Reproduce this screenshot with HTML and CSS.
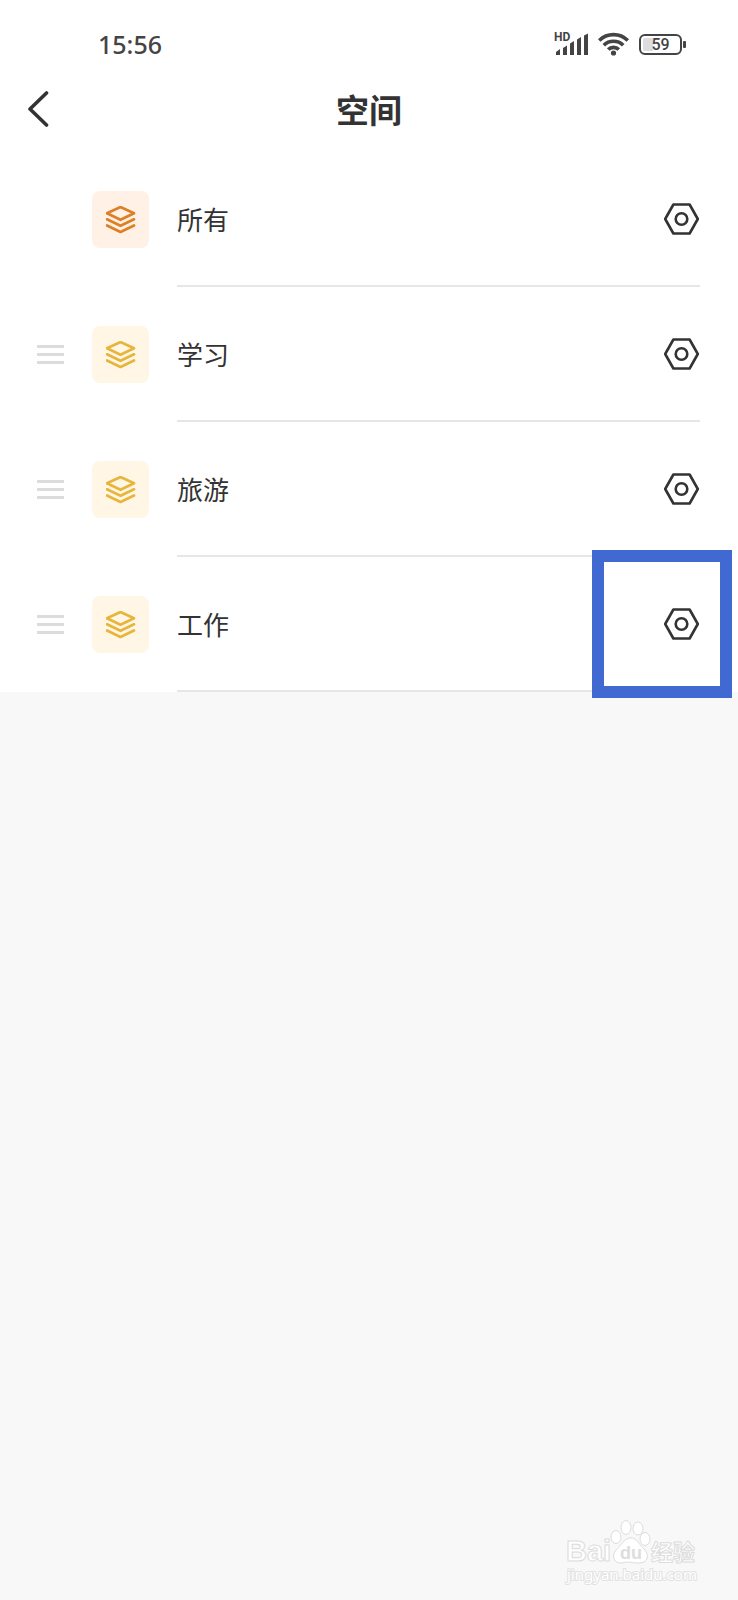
FILE: index.html
```html
<!DOCTYPE html>
<html lang="zh-CN">
<head>
    <meta charset="UTF-8">
    <meta name="viewport" content="width=device-width, initial-scale=1.0">
    <title>空间</title>
    <link rel="stylesheet" href="styles.css">
</head>
<body>
    <!-- shared icons -->
    <svg class="sprite" width="0" height="0" aria-hidden="true">
        <symbol id="layers" viewBox="0 0 30 28">
            <g fill="none" stroke="currentColor" stroke-width="2.7" stroke-linecap="round" stroke-linejoin="round">
                <path d="M14.5 1 L28 7.3 L14.5 13.8 L1 7.3 Z"/>
                <path d="M1 13.3 L14.5 19.8 L28 13.3"/>
                <path d="M1 19.5 L14.5 26 L28 19.5"/>
            </g>
        </symbol>
        <symbol id="nut" viewBox="0 0 36 32">
            <g fill="none" stroke="currentColor" stroke-width="2.6" stroke-linejoin="round">
                <path d="M9.4 1.5 H25.6 L33.8 16 L25.6 30.5 H9.4 L1.2 16 Z"/>
                <circle cx="17.5" cy="16" r="5.8"/>
            </g>
        </symbol>
    </svg>

    <div class="status-bar">
        <span class="time">15:56</span>
        <div class="status-icons">
            <div class="signal">
                <span class="hd">HD</span>
                <svg width="34" height="22" viewBox="0 0 34 22" fill="currentColor">
                    <path d="M1 22 V19 L5 16 V22 Z"/>
                    <path d="M8 22 V15 L12 12.5 V22 Z"/>
                    <path d="M15 22 V10.5 L19 8 V22 Z"/>
                    <path d="M22 22 V6.5 L26 4 V22 Z"/>
                    <path d="M29 22 V2.5 L33 0.5 V22 Z"/>
                </svg>
            </div>
            <svg class="wifi" width="32" height="24" viewBox="0 0 32 24" fill="none" stroke="currentColor" stroke-width="3.6">
                <path d="M1.2 8.5 C9.2 0.6 21.8 0.6 29.8 8.5"/>
                <path d="M5.8 13.2 C11 8 20 8 25.2 13.2"/>
                <path d="M10.2 17.6 C13 14.6 18 14.6 20.8 17.6"/>
                <circle cx="15.5" cy="21" r="2.6" fill="currentColor" stroke="none"/>
            </svg>
            <div class="battery"><span>59</span></div>
        </div>
    </div>

    <header class="title-bar">
        <button class="back" aria-label="返回">
            <svg width="22" height="36" viewBox="0 0 22 36" fill="none" stroke="currentColor" stroke-width="3.6" stroke-linecap="round" stroke-linejoin="round">
                <path d="M19.5 2 L3 18 L19.5 34"/>
            </svg>
        </button>
        <h1>空间</h1>
    </header>

    <ul class="spaces">
        <li class="space all">
            <span class="handle"></span>
            <span class="tile"><svg width="30" height="28"><use href="#layers"/></svg></span>
            <div class="space-body">
                <span class="name">所有</span>
                <button class="setting" aria-label="设置所有"><svg width="36" height="32"><use href="#nut"/></svg></button>
            </div>
        </li>
        <li class="space">
            <span class="handle"><i></i><i></i><i></i></span>
            <span class="tile"><svg width="30" height="28"><use href="#layers"/></svg></span>
            <div class="space-body">
                <span class="name">学习</span>
                <button class="setting" aria-label="设置学习"><svg width="36" height="32"><use href="#nut"/></svg></button>
            </div>
        </li>
        <li class="space">
            <span class="handle"><i></i><i></i><i></i></span>
            <span class="tile"><svg width="30" height="28"><use href="#layers"/></svg></span>
            <div class="space-body">
                <span class="name">旅游</span>
                <button class="setting" aria-label="设置旅游"><svg width="36" height="32"><use href="#nut"/></svg></button>
            </div>
        </li>
        <li class="space marked">
            <span class="handle"><i></i><i></i><i></i></span>
            <span class="tile"><svg width="30" height="28"><use href="#layers"/></svg></span>
            <div class="space-body">
                <span class="name">工作</span>
                <button class="setting" aria-label="设置工作"><svg width="36" height="32"><use href="#nut"/></svg></button>
            </div>
        </li>
    </ul>

    <footer class="watermark">
        <svg width="140" height="68" viewBox="0 0 140 68">
            <g class="wm-fill">
                <text class="wm-brand" x="4" y="41">Bai</text>
                <ellipse cx="54" cy="17" rx="5" ry="6.5"/>
                <ellipse cx="64" cy="7.5" rx="5" ry="7"/>
                <ellipse cx="76" cy="8.5" rx="5" ry="6.5"/>
                <ellipse cx="83" cy="19" rx="5" ry="6.5"/>
                <path d="M68 18 C75 17 77 25 82 29 C88 35 86 43 77 43 C71 43 66 41 60 43 C52 44 49 36 54 30 C59 26 61 19 68 18 Z"/>
                <text class="wm-cn" x="89" y="40">经验</text>
            </g>
            <text class="wm-du" x="58" y="39">du</text>
            <text class="wm-url" x="5" y="60">jingyan.baidu.com</text>
        </svg>
    </footer>
</body>
</html>
```
FILE: styles.css
```css
* {
    box-sizing: border-box;
}
body {
    margin: 0;
    min-height: 100vh;
    display: flex;
    flex-direction: column;
    background-color: #f8f8f8;
    color: #333;
    font-family: "Noto Sans", "Noto Sans CJK SC", sans-serif;
}
svg {
    display: block;
}
button {
    padding: 0;
    border: none;
    background: none;
    color: inherit;
    cursor: pointer;
}
.sprite {
    position: absolute;
}

/* status bar */
.status-bar {
    display: flex;
    justify-content: space-between;
    align-items: center;
    height: 76px;
    padding: 12px 56px 0 98px;
    background-color: #fff;
    color: #444;
}
.time {
    font-size: 25px;
    font-weight: 500;
    line-height: 32px;
}
.status-icons {
    display: flex;
    align-items: center;
    gap: 9px;
}
.signal {
    position: relative;
}
.hd {
    position: absolute;
    top: -2px;
    left: -1px;
    font-family: Roboto, sans-serif;
    font-size: 12px;
    font-weight: 700;
    line-height: 12px;
}
.battery {
    position: relative;
    width: 43px;
    height: 21px;
    border: 2px solid #444;
    border-radius: 6px;
    background: linear-gradient(to right, #ddd 12px, #fff 12px);
    background-clip: content-box;
    padding: 2px;
    font-family: Roboto, sans-serif;
    font-size: 16px;
    font-weight: 500;
    line-height: 14px;
    text-align: center;
}
.battery::after {
    content: "";
    position: absolute;
    top: 5px;
    right: -6px;
    width: 3px;
    height: 7px;
    border-radius: 1px;
    background-color: #444;
}

/* title */
.title-bar {
    display: grid;
    grid-template-columns: 60px 1fr 60px;
    align-items: center;
    height: 76px;
    padding-bottom: 11px;
    background-color: #fff;
}
.back {
    padding-left: 27px;
}
h1 {
    margin: 0;
    font-family: "Noto Sans CJK SC", sans-serif;
    font-size: 33px;
    font-weight: 700;
    line-height: 44px;
    text-align: center;
}

/* list */
.spaces {
    margin: 0;
    padding: 0;
    list-style: none;
    background-color: #fff;
}
.space {
    position: relative;
    display: flex;
    align-items: center;
    height: 135px;
    padding: 0 38px 0 37px;
}
.handle {
    display: flex;
    flex-direction: column;
    gap: 5px;
    width: 27px;
    margin-right: 28px;
}
.handle i {
    height: 3px;
    background-color: #dcdcdc;
}
.tile {
    display: flex;
    align-items: center;
    justify-content: center;
    width: 57px;
    height: 57px;
    margin-right: 28px;
    border-radius: 8px;
    background-color: #fff6e6;
    color: #e8b53c;
}
.all .tile {
    background-color: #fff1e5;
    color: #dd7f26;
}
.space-body {
    flex: 1;
    display: flex;
    align-items: center;
    justify-content: space-between;
    align-self: stretch;
    border-bottom: 2px solid #e6e6e6;
}
.name {
    font-family: "Noto Sans CJK SC", sans-serif;
    font-size: 26px;
    line-height: 36px;
}
.marked::after {
    content: "";
    position: absolute;
    right: 6px;
    bottom: -6px;
    box-sizing: border-box;
    width: 140px;
    height: 148px;
    border: 12px solid #4169d2;
    pointer-events: none;
}

/* watermark */
.watermark {
    display: flex;
    justify-content: flex-end;
    margin-top: auto;
    padding: 0 36px 12px 0;
}
.wm-fill {
    fill: #fff;
    stroke: #dcdcdc;
    stroke-width: 1;
}
.wm-brand {
    font-family: "Liberation Sans", sans-serif;
    font-size: 29px;
    font-weight: 700;
}
.wm-cn {
    font-family: "Noto Sans CJK SC", sans-serif;
    font-size: 22px;
    font-weight: 700;
}
.wm-du {
    font-family: "Liberation Sans", sans-serif;
    font-size: 18px;
    font-weight: 700;
    fill: #ddd;
}
.wm-url {
    font-family: "Noto Sans", sans-serif;
    font-size: 15px;
    fill: #fff;
    stroke: #e2e2e2;
    stroke-width: 2;
    paint-order: stroke;
}
```
